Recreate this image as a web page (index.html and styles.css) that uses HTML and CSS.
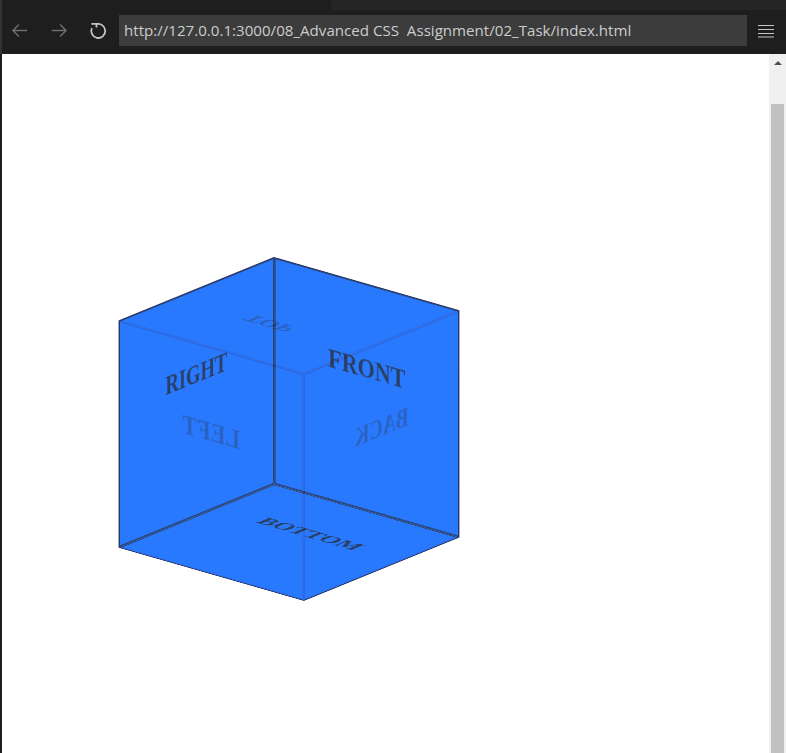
FILE: index.html
```html
<!DOCTYPE html>
<html lang="en">

<head>
    <meta charset="UTF-8">
    <title>Cube</title>
    <link rel="stylesheet" href="styles.css">
</head>

<body>
    <div class="toolbar">
        <div class="tab-strip"></div>
        <div class="nav">
            <svg class="nav-icon dim" viewBox="0 0 16 16"><path d="M14.5 8H2.5M7.5 3L2.5 8L7.5 13" /></svg>
            <svg class="nav-icon dim" viewBox="0 0 16 16"><path d="M1.5 8H13.5M8.5 3L13.5 8L8.5 13" /></svg>
            <svg class="nav-icon reload" viewBox="0 0 16 16"><path d="M6.3 2.7A5.9 5.9 0 1 1 2.4 6M2 2.4H6.3V5.4" /></svg>
            <div class="url">http://127.0.0.1:3000/08_Advanced CSS  Assignment/02_Task/index.html</div>
            <svg class="menu-icon" viewBox="0 0 16 14"><path d="M0 1.5H16M0 5.5H16M0 9.5H16M0 13H16" /></svg>
        </div>
    </div>

    <div class="page">
        <div class="view">
            <div class="cube">
                <div class="face front"><h2>FRONT</h2></div>
                <div class="face back"><h2>LEFT</h2></div>
                <div class="face left"><h2>RIGHT</h2></div>
                <div class="face right"><h2>BACK</h2></div>
                <div class="face top"><h2>TOP</h2></div>
                <div class="face bottom"><h2>BOTTOM</h2></div>
            </div>
        </div>
        <div class="scrollbar">
            <div class="scroll-btn"></div>
            <div class="scroll-thumb"></div>
        </div>
    </div>
</body>

</html>
```

FILE: styles.css
```css
* {
    box-sizing: border-box;
}

html,
body {
    height: 100%;
    margin: 0;
    overflow: hidden;
}

body {
    display: flex;
    flex-direction: column;
    background-color: #1e1e1e;
    font-family: 'Open Sans', 'Noto Sans', sans-serif;
}

.toolbar {
    height: 54px;
    flex: none;
    background-color: #1e1e1e;
    border-left: 2px solid #333333;
}

.tab-strip {
    height: 10px;
    margin-left: 329px;
    background-color: #252526;
}

.nav {
    display: flex;
    align-items: center;
    height: 31px;
    margin-top: 5px;
    padding-left: 8px;
}

.nav-icon {
    width: 19px;
    height: 19px;
    margin-right: 21px;
    flex: none;
    fill: none;
    stroke: #6e6e6e;
    stroke-width: 1.2;
}

.nav-icon.reload {
    margin-left: -1px;
    margin-right: 11px;
    stroke: #c5c5c5;
    stroke-width: 1.5;
}

.url {
    width: 628px;
    height: 31px;
    padding-left: 5px;
    flex: none;
    background-color: #3c3c3c;
    color: #cccccc;
    font-size: 15.12px;
    line-height: 31px;
    white-space: pre;
}

.menu-icon {
    width: 16px;
    height: 14px;
    margin-left: 11px;
    fill: none;
    stroke: #c5c5c5;
    stroke-width: 1.2;
}

.page {
    display: flex;
    flex: 1;
    min-height: 0;
    overflow: hidden;
    background-color: white;
    border-left: 2px solid #1e1e1e;
}

.view {
    flex: 1;
    min-height: 0;
}

.scrollbar {
    display: flex;
    flex-direction: column;
    width: 17px;
    flex: none;
    padding: 0 2px;
    background-color: #f0f0f0;
}

.scroll-btn {
    height: 50px;
    flex: none;
    padding-top: 7px;
}

.scroll-btn::before {
    content: "";
    display: block;
    width: 0;
    margin: 0 auto;
    border-left: 4px solid transparent;
    border-right: 4px solid transparent;
    border-bottom: 4px solid #505050;
}

.scroll-thumb {
    flex: 1;
    background-color: #c1c1c1;
}

/* cube */
.cube {
    position: relative;
    width: 242px;
    height: 242px;
    margin-left: 165.7px;
    margin-top: 253.7px;
    transform-style: preserve-3d;
    transform: rotateX(20deg) rotateY(40deg);
}

.face {
    position: absolute;
    width: 100%;
    height: 100%;
    padding-top: 71px;
    background-color: rgb(0, 95, 255);
    border: 2px solid #000a28;
    opacity: 0.6;
    text-align: center;
}

.face h2 {
    margin: 0;
    color: black;
    font-family: 'Liberation Serif', serif;
    font-size: 28.8px;
    line-height: 34px;
}

.front {
    transform: translateZ(121px);
}

.back {
    border-color: #001e96;
    transform: rotateY(180deg) translateZ(121px);
}

.left {
    transform: rotateY(-90deg) translateZ(121px);
}

.right {
    border-color: #001e96;
    transform: rotateY(90deg) translateZ(121px);
}

.top {
    border-color: #001e96;
    transform: rotateX(90deg) translateZ(121px);
}

.bottom {
    padding-top: 68px;
    transform: rotateX(-90deg) translateZ(121px);
}
```
